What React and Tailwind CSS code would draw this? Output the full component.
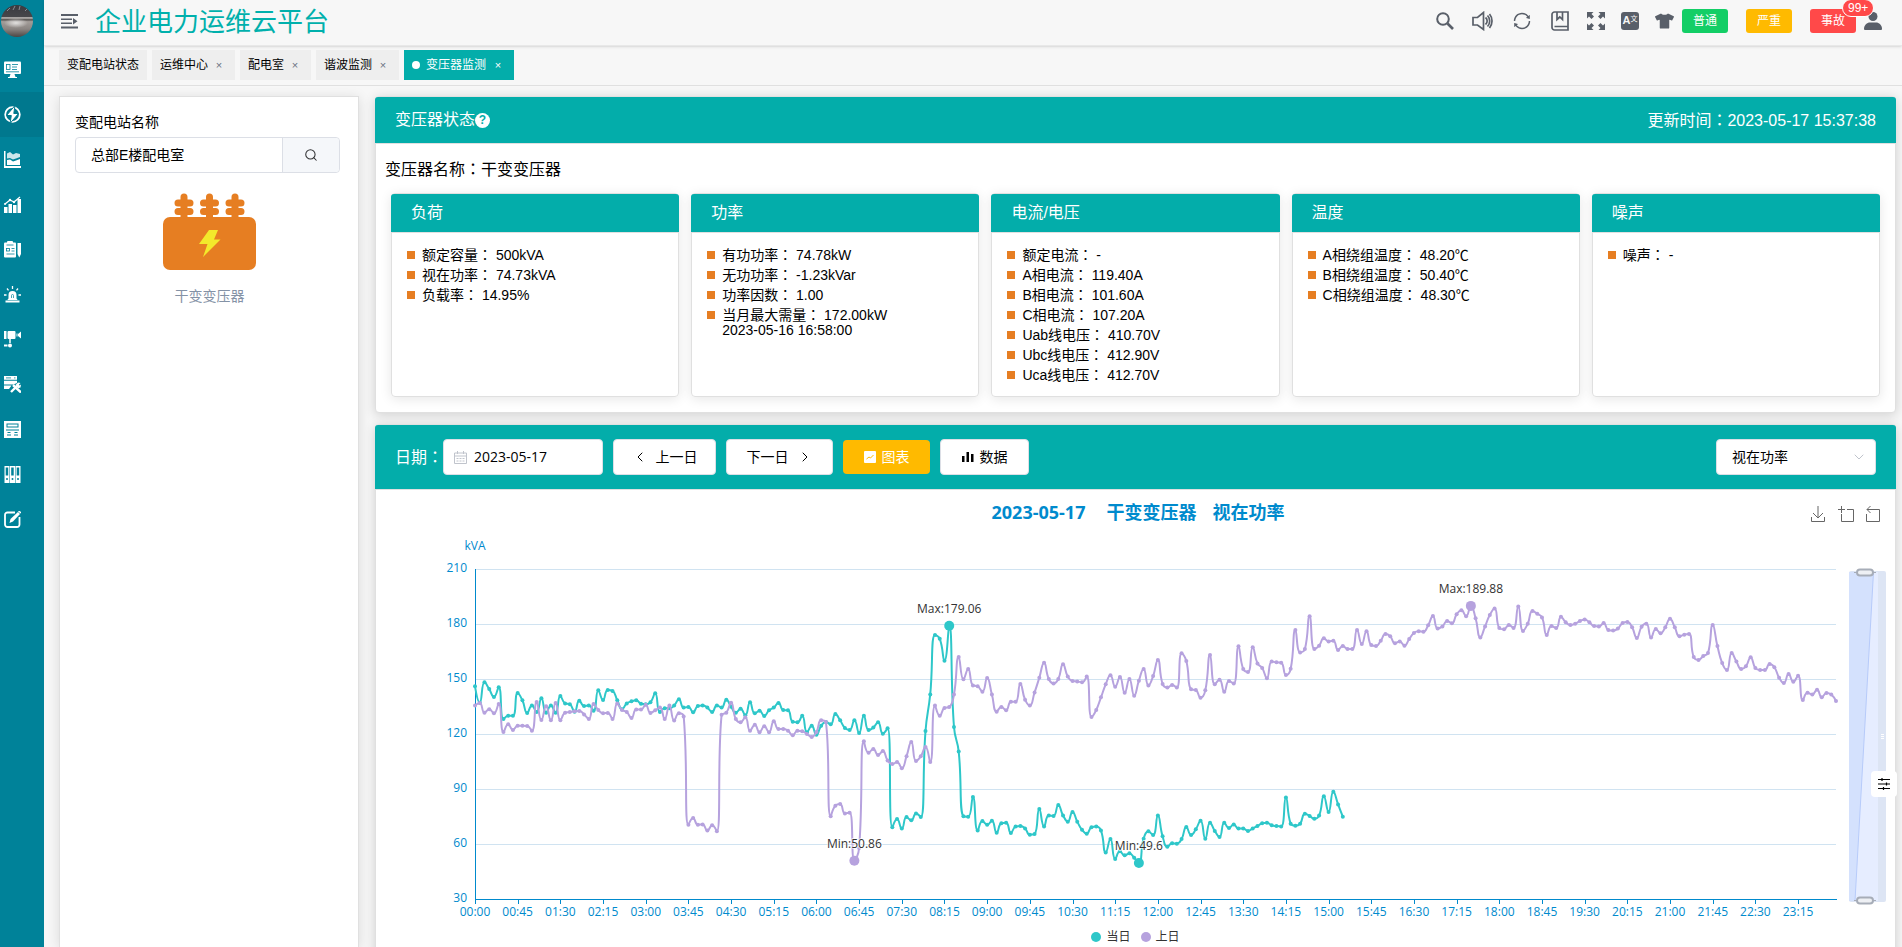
import React, { useState } from 'react';
import { FaTshirt } from 'react-icons/fa';
import { AiOutlineSync } from 'react-icons/ai';
import { Search, ChevronLeft, ChevronRight, ChevronDown } from 'lucide-react';

// one sample every 5 minutes, kVA
const TODAY = [
  146, 137, 148.2, 144.5, 140.2, 145.5, 128.2, 130, 130, 142.4, 138.4, 131.5,
  135.6, 132, 139.5, 131.6, 135.6, 131.6, 140.7, 136.7, 136.2, 132.2, 138.2, 135.3,
  135.6, 132.7, 143.8, 138.5, 144, 143.5, 138.4, 133.5, 136.7, 137.8, 138.4, 136.5,
  136.2, 137.3, 142.2, 132, 134, 134, 135.5, 138.9, 134.4, 134.7, 131.8, 135.3,
  135.6, 134.4, 132, 135.6, 134.4, 138.7, 134.9, 131.6, 133.8, 130.2, 137.3, 131.3,
  132.7, 129.8, 132.9, 134.4, 136.9, 133.1, 132.9, 126.7, 126.4, 130, 120.9, 124.5,
  119.6, 124.5, 126.5, 125.3, 130.9, 127.5, 123.3, 122.2, 127.5, 120.5, 130, 122.2,
  123.5, 126.4, 120.2, 123.1, 69.1, 73.6, 68.4, 74.7, 72.9, 76.7, 74.7, 121.6,
  141.6, 174, 172, 160, 179.06, 123.8, 110.4, 75.1, 74.9, 85.6, 67.3, 72.5,
  70.5, 72.7, 66.2, 71.3, 71.6, 66, 69.5, 69.8, 68.5, 65.1, 65.5, 79.1,
  69.6, 75.5, 75.3, 81.3, 75.6, 72.2, 77.5, 72.2, 67.8, 65.6, 69.1, 69.5,
  67.3, 55.3, 62.7, 51.8, 56, 53.8, 54.9, 52.5, 49.6, 62.9, 66.9, 64.9,
  75.6, 64.2, 58.5, 60.4, 60.2, 62.7, 69.3, 64.9, 68, 72.7, 62.9, 71.6,
  67.1, 63.8, 71.6, 68.7, 70.7, 68.4, 68.4, 67.1, 68.5, 69.8, 71.3, 71.6,
  70.2, 69.8, 69.6, 85.3, 71.1, 70, 71.1, 76.5, 75.3, 73.8, 75.5, 86,
  77.5, 88.5, 81.6, 74.9,
];

const YESTERDAY = [
  135.6, 136.9, 131.6, 133.5, 131.3, 136.4, 121.1, 125.3, 122.2, 124.5, 124.5, 124.4,
  121.8, 137.5, 127.6, 135.1, 127.5, 136.9, 127.5, 131.6, 132, 132.4, 132.5, 130.7,
  128.2, 136.4, 133.1, 131.3, 131.5, 128.2, 136.7, 133.1, 132, 128.7, 133.3, 133.3,
  136, 131.5, 132.9, 134.4, 128.2, 135.6, 127.3, 131.3, 129.6, 70.5, 74.2, 70.5,
  70.7, 67.3, 70.2, 66.9, 130.5, 131.6, 137.1, 128.2, 126.4, 129.1, 121.8, 125.1,
  120.9, 124.2, 120.9, 126.9, 122.7, 122.7, 121.8, 119.3, 121.8, 121.5, 120, 118.4,
  121.1, 127.5, 126.5, 75.1, 80.9, 81.8, 76.7, 77.1, 50.86, 57.8, 116, 109.8,
  111.8, 108.5, 110.7, 105.6, 103.6, 104.7, 101.3, 107.8, 115.6, 105.3, 107.8, 112.9,
  104.7, 135.5, 130, 134.2, 134.7, 141.6, 162, 149.8, 155.5, 146.5, 146, 143.1,
  150.5, 141.5, 132.2, 134.7, 132.9, 137.6, 137.6, 147.3, 138.7, 135.5, 142.7, 150.7,
  158.9, 150, 147.6, 150, 158, 151.3, 148.9, 148.7, 148.2, 151.3, 129.3, 133.1,
  140, 147.1, 152, 145.8, 151.1, 142.5, 150, 140.9, 149.1, 155.5, 146.5, 151.6,
  160.4, 147.3, 145.3, 146.7, 145.3, 164, 159.8, 144.4, 144, 139.8, 143.8, 163.1,
  147.1, 149.6, 143.1, 148.9, 147.5, 167.8, 155.5, 153.8, 167.3, 158.5, 156, 150.4,
  159.5, 159.1, 158.9, 152.2, 155.6, 176.7, 164.5, 166.4, 184.2, 166.4, 168.2, 172.2,
  170.5, 170.9, 165.8, 168, 166.4, 166.4, 176.7, 169.1, 176, 168.5, 168, 170.9,
  174.5, 173.3, 169.5, 170.5, 168.2, 171.8, 175.1, 176, 175.8, 179.3, 184.4, 177.5,
  178.7, 181.6, 180.4, 185.3, 187.5, 184.2, 189.88, 183.1, 172.7, 178.7, 184.9, 188.4,
  177.8, 177.1, 179.5, 177.8, 189.6, 176.2, 180.2, 187.1, 185.6, 183.6, 174, 178.9,
  177.8, 184, 180.9, 179.5, 180.2, 181.6, 182.4, 180.9, 178.9, 178.7, 180.5, 176.7,
  176.4, 177.5, 180.5, 181.1, 178.2, 172.4, 178.5, 180.2, 172.7, 177.3, 174.9, 178.2,
  182.9, 178.2, 173.3, 174.2, 174.5, 162, 160.4, 162.5, 164.2, 179.5, 168, 158.7,
  154.9, 164.2, 159.6, 155.5, 156.9, 161.8, 156, 154.9, 154.9, 158.2, 156.4, 150.7,
  147.8, 152.7, 148.5, 151.8, 138.5, 142.5, 141.6, 144.2, 140, 142.4, 141.5, 138,
];

const CARDS = [
  { title: '负荷', rows: [['额定容量', '500kVA'], ['视在功率', '74.73kVA'], ['负载率', '14.95%']] },
  { title: '功率', rows: [['有功功率', '74.78kW'], ['无功功率', '-1.23kVar'], ['功率因数', '1.00'], ['当月最大需量', '172.00kW', '2023-05-16 16:58:00']] },
  { title: '电流/电压', rows: [['额定电流', '-'], ['A相电流', '119.40A'], ['B相电流', '101.60A'], ['C相电流', '107.20A'], ['Uab线电压', '410.70V'], ['Ubc线电压', '412.90V'], ['Uca线电压', '412.70V']] },
  { title: '温度', rows: [['A相绕组温度', '48.20℃'], ['B相绕组温度', '50.40℃'], ['C相绕组温度', '48.30℃']] },
  { title: '噪声', rows: [['噪声', '-']] },
];

const TABS = ['变配电站状态', '运维中心', '配电室', '谐波监测', '变压器监测'];

// ---------- sidebar icons ----------
const BG = '#008299';
const NAV = [
  { name: '监控', icon: <><rect x="0" y="0.500" width="17" height="12.500" rx="1" /><path d="M6.500 13h4l1 3H5.500z" /><path d="M4 16.500h9" stroke="currentColor" /><g stroke={BG} fill="none" strokeWidth=".8"><rect x="2.500" y="3.500" width="3.500" height="5" /><path d="M8 3.500h6M8 6h5M8 8.500h5M2 10.800h13" /></g></> },
  { name: '电力', icon: <><circle cx="8.500" cy="8.500" r="7.300" fill="none" stroke="currentColor" strokeWidth="1.800" /><path d="M11 -.5 2.500 9.500h4.800L6 17.500l8.500-10H9.800z" stroke="#00788e" strokeWidth="1" /></> },
  { name: '趋势', icon: <><path d="M0 0h1.500v15H17v2H0z" /><path d="M3 2.500l3-1.500 3 2.500 3-1.500 4 1v3l-4 1.500-3 1-3-1.500-3 .5z" opacity=".8" /><path d="M3 9l3-.5 3 2 3-1 4-1.500v6H3z" /></> },
  { name: '统计', icon: <><rect x="0" y="11" width="3.500" height="6" /><rect x="4.500" y="8" width="3.500" height="9" /><rect x="9" y="9" width="3.500" height="8" /><rect x="13.500" y="3" width="3.500" height="14" /><path d="M1 8l5-4 4 2 6-5" fill="none" stroke="currentColor" strokeWidth="1.300" /><circle cx="1" cy="8" r="1" /><circle cx="6" cy="4" r="1.200" /><circle cx="10" cy="6" r="1.200" /></> },
  { name: '工单', icon: <><rect x="0" y="1.500" width="12" height="15" rx="1" /><rect x="3" y="0" width="6" height="3" rx="1" /><path d="M13.500 2H17v11l-1.700 3.500L13.500 13z" /><g stroke={BG} fill="none" strokeWidth=".8"><path d="M2.500 4h7M7.500 7.500h3M7.500 10h3M2.500 13h8" /><rect x="2.500" y="7.500" width="3" height="2.500" /></g></> },
  { name: '告警', icon: <><path d="M4.500 12.500V9a4 4 0 0 1 8 0v3.500l1.200 1.500H3.300z" /><rect x="1.500" y="14.500" width="14" height="2" /><path d="M8.500 0v3M3 2.500l1.500 1.800M14 2.500l-1.500 1.800M0 9h2.500M14.500 9H17" stroke="currentColor" strokeWidth="1.300" /><path d="M7.500 12V9.500a1 1 0 0 1 2 0V12" stroke={BG} strokeWidth=".7" fill="none" /></> },
  { name: '视频', icon: <><rect x="0" y="0" width="2.500" height="8" /><rect x="3.500" y="0" width="8" height="8" rx="1" /><path d="M12.500 2.500h1v3h-1zM14 3l3-2.500v7L14 5z" /><path d="M6 8v4" stroke="currentColor" strokeWidth="1.500" /><circle cx="6" cy="14.500" r="2" /><path d="M0 14.500h3.500" stroke="currentColor" strokeWidth="2" /></> },
  { name: '运维', icon: <><path d="M0 0h13v3.800H0zM0 4.800h13V7L9.500 8.500H0zM0 9.500h7.500L5 13H0z" /><path d="M7 16l6-6M9 9l8 7.500" stroke="currentColor" strokeWidth="2.400" /><path d="M11.500 9l2.500-2.500 2.500.5-1.700 1.700.8.800L17 8.500l-.5 3-2.500.8z" /><path d="M2 1.900h5M10 1.900h1.500" stroke={BG} strokeWidth=".8" /></> },
  { name: '设备', icon: <><rect x="0" y="0" width="17" height="17" /><g stroke={BG} fill="none"><rect x="3" y="3" width="11" height="3" /><path d="M2 9h13M3.500 11.500h3M10.500 11.500h3M3 14h4M10 14h4" /></g></> },
  { name: '档案', icon: <><path d="M.5 0h5v17h-5zM6 0h5v17H6zM11.500 0h5v17h-5z" /><g fill={BG}><rect x="1.700" y="1.500" width="2.500" height="8" /><rect x="7.200" y="1.500" width="2.500" height="8" /><rect x="12.700" y="1.500" width="2.500" height="8" /><circle cx="3" cy="13" r="1" /><circle cx="8.500" cy="13" r="1" /><circle cx="14" cy="13" r="1" /></g></> },
  { name: '编辑', icon: <><path d="M11 1.500H3.500A2.500 2.500 0 0 0 1 4v9.500A2.500 2.500 0 0 0 3.500 16H13a2.500 2.500 0 0 0 2.500-2.500V6" fill="none" stroke="currentColor" strokeWidth="1.800" /><path d="M5.500 12l1-4 7.500-7 2 2-7 7.500z" /><path d="M14.500 0l2.500 2" stroke="currentColor" strokeWidth="1.500" /></> },
];

// full width colon, centred in its cell
const Colon = () => <span className="font-['Noto_Sans_CJK_TC',sans-serif]">：</span>;

function Sidebar() {
  return (
    <nav className="w-11 shrink-0 bg-[#008299] text-white">
      <div className="h-[47px] pl-px pt-[5px]">
        <svg viewBox="0 0 32 32" className="w-8 h-8" aria-label="avatar">
          <defs>
            <linearGradient id="av" x1="0" y1="0" x2="0" y2="1">
              <stop offset="0" stopColor="#3a3a40" /><stop offset=".36" stopColor="#46464a" />
              <stop offset=".4" stopColor="#c4c0bd" /><stop offset=".46" stopColor="#55514f" />
              <stop offset=".52" stopColor="#a39d99" /><stop offset=".75" stopColor="#8b8582" />
              <stop offset="1" stopColor="#4b4644" />
            </linearGradient>
            <radialGradient id="shine"><stop offset="0" stopColor="#fff" stopOpacity=".7" /><stop offset="1" stopColor="#fff" stopOpacity="0" /></radialGradient>
          </defs>
          <circle cx="16" cy="16" r="16" fill="url(#av)" />
          <ellipse cx="15" cy="18" rx="12" ry="5" fill="url(#shine)" />
          <path d="M6 6l3-3M12 5l2-4M18 5l1-4M24 6l2-2" stroke="#8a8a92" />
        </svg>
      </div>
      {NAV.map((n, i) => (
        <a key={n.name} href="#" aria-label={n.name} className={i === 1 ? 'flex items-center h-[45px] pl-1 bg-[#00788e]' : 'flex items-center h-[45px] pl-1'}>
          <svg viewBox="0 0 17 17" className="w-[17px] h-[17px]" fill="currentColor">{n.icon}</svg>
        </a>
      ))}
    </nav>
  );
}

function TopBar() {
  return (
    <header className="flex items-center h-[46px] pl-[17px] pr-5 border-b border-[#e8e8e8] shadow-sm text-[#595f69]">
      <button aria-label="菜单">
        <svg viewBox="0 0 17 15" className="w-[17px] h-[15px] mt-[-2px]" fill="currentColor">
          <path d="M0 0h17v2H0zM0 4.500h11v1.500H0zM0 8.500h11V10H0zM0 12.500h17v2H0zM12 4l4.500 3.200L12 10.500z" />
        </svg>
      </button>
      <h1 className="ml-[17px] mb-[2px] text-[26px] leading-9 text-[#00b0ac]">企业电力运维云平台</h1>
      <div className="ml-auto flex items-center pb-1">
        <button aria-label="搜索" className="mr-[18px]">
          <svg viewBox="0 0 18 18" className="w-[18px] h-[18px]" fill="none" stroke="currentColor"><circle cx="7" cy="7" r="5.800" strokeWidth="2" /><path d="M11.500 11.500l5.500 5.500" strokeWidth="2.600" /></svg>
        </button>
        <button aria-label="声音" className="mr-[19px]">
          <svg viewBox="0 0 21 20" className="w-[21px] h-5" fill="none" stroke="currentColor" strokeWidth="1.700"><path d="M1 6.500h4.500L11.500 1.500v17L5.500 14H1zM13.500 6.500a4.500 4.500 0 0 1 0 7M15.500 4.500a8 8 0 0 1 0 11M17.500 3a11 11 0 0 1 0 14" /></svg>
        </button>
        <button aria-label="刷新" className="mr-[19px]"><AiOutlineSync className="w-5 h-5" /></button>
        <button aria-label="手册" className="mr-[18px]">
          <svg viewBox="0 0 18 20" className="w-[18px] h-5" fill="none" stroke="currentColor" strokeWidth="1.700"><path d="M17 15.500V1H3.500A2.500 2.500 0 0 0 1 3.500v13A2.500 2.500 0 0 0 3.500 19H17v-3.500H3.500M6 1v7.500L8.800 6l2.700 2.500V1" /></svg>
        </button>
        <button aria-label="全屏" className="mr-4">
          <svg viewBox="0 0 18 18" className="w-[18px] h-[18px]" fill="currentColor"><path d="M0 0h6.500L4.500 2 7 4.500 4.500 7 2 4.500 0 6.500zM18 0v6.500L16 4.500 13.500 7 11 4.500 13.500 2l-2-2zM0 18v-6.500l2 2L4.500 11 7 13.500 4.500 16l2 2zM18 18h-6.500l2-2L11 13.500l2.500-2.500 2.500 2.500 2-2z" /></svg>
        </button>
        <button aria-label="语言" className="mr-4 w-[18px] h-[18px] rounded-[3px] bg-[#595f69] text-[#f7f7f7] flex items-center justify-center text-[11px] leading-none font-bold">
          A<span className="text-[7px] font-normal mb-1">文</span>
        </button>
        <button aria-label="主题" className="mr-2"><FaTshirt className="w-[19px] h-[18px]" /></button>
        <button className="w-[46px] h-6 rounded-[3px] bg-[#13ce66] text-white text-xs">普通</button>
        <button className="w-[46px] h-6 ml-[18px] rounded-[3px] bg-[#ffba00] text-white text-xs">严重</button>
        <div className="relative ml-[18px] flex">
          <button className="w-[46px] h-6 rounded-[3px] bg-[#ff4949] text-white text-xs">事故</button>
          <sup className="absolute -top-[10px] left-8 z-10 h-[18px] px-[5px] rounded-full border border-white bg-[#ff4949] text-white text-xs leading-4">99+</sup>
        </div>
        <button aria-label="用户" className="ml-2">
          <svg viewBox="0 0 18 18" className="w-[18px] h-[18px]" fill="currentColor"><circle cx="9" cy="4.500" r="4.500" /><path d="M0 17c0-4 3-6.500 6-6.500h6c3 0 6 2.500 6 6.500q0 1-1 1H1q-1 0-1-1z" /></svg>
        </button>
      </div>
    </header>
  );
}

function TabBar() {
  return (
    <div className="flex items-start gap-[5px] h-10 pt-1 pl-[15px] border-b border-[#e0e0e0] text-xs">
      {TABS.map((t, i) => (
        <div key={t} className={i === 4 ? 'flex items-center h-[30px] px-2 bg-[#03adaa] text-white' : 'flex items-center h-[30px] px-2 bg-[#eeeeee] text-black'}>
          {i === 4 && <span className="w-2 h-2 mr-[6px] rounded-full bg-white" />}
          <a href="#">{t}</a>
          {i > 0 && <button aria-label="关闭" className={i === 4 ? 'ml-1 w-4 text-[11px] text-white' : 'ml-[3px] w-4 text-[11px] text-gray-500'}>×</button>}
        </div>
      ))}
    </div>
  );
}

function StationPanel() {
  return (
    <aside className="w-[300px] shrink-0 px-[15px] pt-[14px] bg-white border border-b-0 border-[#e0e0e0] shadow-[0_2px_12px_rgba(0,0,0,0.12)] text-sm">
      <label htmlFor="station" className="block leading-5 pt-px">变配电站名称</label>
      <div className="flex h-9 mt-[5px] mr-[3px] border border-[#dcdfe6] rounded">
        <input id="station" defaultValue="总部E楼配电室" className="flex-1 min-w-0 px-[15px] outline-none" />
        <button aria-label="搜索" className="w-[57px] flex items-center justify-center bg-[#f5f7fa] border-l border-[#dcdfe6] rounded-r"><Search size={14} strokeWidth={1.8} className="text-[#303133]" /></button>
      </div>
      <button className="block w-full mt-5 pl-px text-[#8492a6]">
        <svg viewBox="0 0 93 77" className="w-[93px] h-[77px] mx-auto">
          <g stroke="#e67e22" strokeWidth="7" strokeLinecap="round">
            <path d="M21 4v24M15 10h12M15 18.500h12M46.500 4v24M40.500 10h12M40.500 18.500h12M72 4v24M66 10h12M66 18.500h12" />
          </g>
          <rect y="24" width="93" height="53" rx="7" fill="#e67e22" />
          <path d="M46 37h9l-4 9.500h6.500L40 64l4.500-13H36z" fill="#f3e92b" />
        </svg>
        <span className="block mt-4 leading-5">干变变压器</span>
      </button>
    </aside>
  );
}

function StatusPanel() {
  return (
    <section className="bg-white border border-[#e0e0e0] rounded shadow-[0_2px_12px_rgba(0,0,0,0.16)]">
      <div className="flex items-center justify-between h-[47px] -mx-px px-5 rounded-t-[3px] bg-[#03adaa] text-white border-b border-[#e0e0e0]">
        <h2 className="flex items-center">变压器状态
          <button aria-label="帮助" className="w-[15px] h-[15px] rounded-full bg-white text-[#03adaa] text-xs leading-[15px] font-bold">?</button>
        </h2>
        <span>更新时间<Colon />2023-05-17 15:37:38</span>
      </div>
      <p className="h-[37px] pl-[9px] pt-3 leading-6">变压器名称<Colon />干变变压器</p>
      <div className="grid grid-cols-5 gap-3 px-[15px] pt-3 pb-[15px]">
        {CARDS.map((c) => (
          <div key={c.title} className="h-[204px] border border-[#e0e0e0] rounded shadow-[0_2px_12px_rgba(0,0,0,0.1)]">
            <h3 className="h-[39px] -mx-px leading-[38px] px-5 rounded-t-[3px] bg-[#03adaa] text-white border-b border-[#e0e0e0]">{c.title}</h3>
            <ul className="pt-[13px] pl-[15px] text-sm leading-4">
              {c.rows.map((r) => (
                <li key={r[0]} className="flex h-4 mb-1">
                  <span className="w-2 h-2 mt-[5px] mr-[7px] shrink-0 bg-[#e67e22]" />
                  <span>{r[0]}<Colon /> {r[1]}{r[2] && <span className="block leading-[14px]">{r[2]}</span>}</span>
                </li>
              ))}
            </ul>
          </div>
        ))}
      </div>
    </section>
  );
}

// ---------- chart ----------
const X0 = 99;
const STEP = 1361 / 287;
const px = (i) => X0 + i * STEP;
const py = (v) => 35 + ((210 - v) * 330) / 180;
const clamp = (v, a, b) => Math.max(Math.min(a, b), Math.min(Math.max(a, b), v));

// bezier smoothing that never leaves the box between two samples
function smoothPath(data) {
  const p = data.map((v, i) => [px(i), py(v)]);
  let d = `M${p[0][0]} ${p[0][1]}`;
  let out = p[0];
  for (let i = 1; i < p.length; i++) {
    const [x, y] = p[i];
    const prev = p[i - 1];
    const next = p[i + 1];
    let c1 = [x, y];
    let nextOut = [x, y];
    if (next) {
      const lp = Math.hypot(x - prev[0], y - prev[1]);
      const ln = Math.hypot(next[0] - x, next[1] - y);
      const r = ln / (ln + lp);
      nextOut = [0, 1].map((k) => clamp(p[i][k] + (next[k] - prev[k]) * 0.5 * r, p[i][k], next[k]));
      c1 = [0, 1].map((k) => clamp(p[i][k] - ((nextOut[k] - p[i][k]) * lp) / ln, prev[k], p[i][k]));
      nextOut = [0, 1].map((k) => p[i][k] + ((p[i][k] - c1[k]) * ln) / lp);
    }
    d += `C${out[0].toFixed(1)} ${out[1].toFixed(1)} ${c1[0].toFixed(1)} ${c1[1].toFixed(1)} ${x.toFixed(1)} ${y.toFixed(1)}`;
    out = nextOut;
  }
  return d;
}

function Series({ data, color }) {
  return (
    <g>
      <path d={smoothPath(data)} fill="none" stroke={color} strokeWidth="2" strokeLinejoin="bevel" />
      {data.map((v, i) => <circle key={i} cx={px(i)} cy={py(v)} r="2" fill={color} />)}
    </g>
  );
}

function Mark({ i, v, label, color }) {
  return (
    <g>
      <circle cx={px(i)} cy={py(v)} r="5" fill={color} />
      <text x={px(i)} y={py(v) - 13} textAnchor="middle" fill="#333" stroke="#fff" strokeWidth="2" strokeOpacity=".7" paintOrder="stroke">{label}</text>
    </g>
  );
}

function Handle({ y }) {
  return (
    <g stroke="#a7adb8" fill="#eef0f4">
      <path d={`M1478 ${y}h22`} strokeWidth="1" />
      <rect x="1481" y={y - 3} width="16" height="6" rx="3" strokeWidth="2" />
    </g>
  );
}

function LoadChart({ hidden }) {
  const hours = Array.from({ length: 32 }, (_, k) => k * 9);
  const label = (i) => `${String(Math.floor((i * 5) / 60)).padStart(2, '0')}:${String((i * 5) % 60).padStart(2, '0')}`;
  return (
    <svg viewBox="0 0 1519 390" className="block w-full font-['Open_Sans','Noto_Sans',sans-serif]" fontSize="12">
      <text x={X0} y="16" textAnchor="middle" fill="#008acd">kVA</text>
      {[210, 180, 150, 120, 90, 60, 30].map((v) => (
        <g key={v}>
          {v > 30 && <path d={`M${X0} ${Math.round(py(v))}.5H1460`} stroke="#d0e3f1" />}
          <text x="91" y={py(v) + 3} textAnchor="end" fill="#008acd">{v}</text>
        </g>
      ))}
      <path d="M99.5 35v331M99 365.500h1362" stroke="#008acd" fill="none" />
      {hours.map((i) => (
        <g key={i}>
          <path d={`M${Math.round(px(i))}.5 365v5`} stroke="#008acd" />
          <text x={px(i)} y="382" textAnchor="middle" fill="#008acd">{label(i)}</text>
        </g>
      ))}
      {!hidden.today && <Series data={TODAY} color="#2ec7c9" />}
      {!hidden.yesterday && <Series data={YESTERDAY} color="#b6a2de" />}
      {!hidden.today && <><Mark i={100} v={179.06} label="Max:179.06" color="#2ec7c9" /><Mark i={140} v={49.6} label="Min:49.6" color="#2ec7c9" /></>}
      {!hidden.yesterday && <><Mark i={210} v={189.88} label="Max:189.88" color="#b6a2de" /><Mark i={80} v={50.86} label="Min:50.86" color="#b6a2de" /></>}

      {/* zoom slider */}
      <rect x="1473" y="37" width="37" height="331" rx="2" fill="#dde5f4" />
      <rect x="1473" y="38" width="29" height="329" fill="#e6edff" />
      <path d="M1473 38h24.500L1479 367h-6z" fill="#d4e1fd" />
      <path d="M1497.500 38L1479 367" stroke="#b7cbfa" />
      <path d="M1505 200.500h3M1505 202.500h3M1505 204.500h3" stroke="#fff" />
      <Handle y={38.5} />
      <Handle y={366.5} />
    </svg>
  );
}

const whiteBtn = 'flex items-center justify-center gap-2 h-9 rounded bg-white border border-[#dcdfe6] text-black whitespace-nowrap';

function ChartPanel() {
  const [hidden, setHidden] = useState({});
  const toggle = (k) => setHidden({ ...hidden, [k]: !hidden[k] });
  return (
    <section className="mt-[11px] bg-white border border-[#e0e0e0] rounded shadow-[0_2px_12px_rgba(0,0,0,0.16)]">
      <div className="flex items-center h-[65px] -mx-px px-5 rounded-t-[3px] bg-[#03adaa] border-b border-[#e0e0e0] text-sm">
        <label htmlFor="date" className="text-base text-white">日期<Colon /></label>
        <div className="flex items-center w-40 h-9 pl-[10px] rounded bg-white border border-[#dcdfe6]">
          <svg viewBox="0 0 13 13" className="w-[13px] h-[13px] shrink-0" fill="none" stroke="#c0c4cc"><path d="M.5 2h12v10.500H.500zM.5 5h12M3.500 0v3M9.500 0v3M2.500 7.500h2M5.500 7.500h2M8.500 7.500h2M2.500 10h2M5.500 10h2M8.500 10h2" /></svg>
          <input id="date" defaultValue="2023-05-17" className="w-full min-w-0 ml-[7px] outline-none font-['Open_Sans',sans-serif]" />
        </div>
        <button className={whiteBtn + ' w-[103px] ml-[10px]'}><ChevronLeft size={16} strokeWidth={1.5} />上一日</button>
        <button className={whiteBtn + ' w-[107px] ml-[10px]'}>下一日<ChevronRight size={16} strokeWidth={1.5} /></button>
        <button className="flex items-center justify-center gap-[6px] w-[87px] h-[34px] ml-[10px] rounded bg-[#ffba00] text-white">
          <svg viewBox="0 0 12 12" className="w-3 h-3"><rect width="12" height="12" rx="1" fill="#fff" /><path d="M2.500 8l2.500-2 1.500 1L9.500 4" fill="none" stroke="#ffba00" /></svg>图表
        </button>
        <button className="flex items-center justify-center gap-[6px] w-[89px] h-9 ml-[10px] rounded bg-white border border-[#dcdfe6]">
          <svg viewBox="0 0 12 12" className="w-3 h-3"><path d="M0 5h2.500v6H0zM4.500 1H7v10H4.500zM9 3h2.500v8H9z" /></svg>数据
        </button>
        <div className="relative ml-auto">
          <select aria-label="参数" className="appearance-none w-40 h-9 pl-[15px] rounded bg-white border border-[#dcdfe6] outline-none">
            <option>视在功率</option>
            <option>有功功率</option>
          </select>
          <ChevronDown size={16} strokeWidth={1.5} className="absolute right-[9px] top-[10px] text-[#c0c4cc] pointer-events-none" />
        </div>
      </div>
      <div className="grid grid-cols-3 items-center h-11">
        <h2 className="col-start-2 flex justify-center gap-4 text-lg leading-6 font-bold text-[#008acd] font-['Open_Sans','Noto_Sans_CJK_SC',sans-serif]">
          <span className="w-[104px] text-center">2023-05-17</span><span>干变变压器</span><span>视在功率</span>
        </h2>
        <div className="flex justify-end gap-3 pr-[15px] pt-1 text-[#666]">
          <button aria-label="保存为图片"><svg viewBox="0 0 16 17" className="w-4 h-[17px]" fill="none" stroke="currentColor"><path d="M1.500 11v4.500h13V11M8 0v12M3 7l5 5 5-5" /></svg></button>
          <button aria-label="区域缩放"><svg viewBox="0 0 16 17" className="w-4 h-[17px]" fill="none" stroke="currentColor"><path d="M3.500 0v7M0 3.500h7M9 3.500h6.500v12h-12V8" /></svg></button>
          <button aria-label="还原"><svg viewBox="0 0 14 17" className="w-[14px] h-[17px]" fill="none" stroke="currentColor"><path d="M4.500 0L1 3.500 4.500 7M1 3.500h12.500v12H.500V8" /></svg></button>
        </div>
      </div>
      <div className="relative">
        <LoadChart hidden={hidden} />
        <button aria-label="设置" className="absolute -right-[2px] top-[237px] w-[26px] h-[26px] flex items-center justify-center rounded bg-white">
          <svg viewBox="0 0 12 12" className="w-3 h-3" stroke="#000" strokeWidth="1.200"><path d="M0 1.500h12M0 6h12M0 10.500h12M4 0v3M8.500 4.500v3M5.500 9v3" /></svg>
        </button>
      </div>
      <div className="flex justify-center gap-[10px] h-[26px] text-xs text-[#333]">
        <button onClick={() => toggle('today')} className="flex items-center gap-[5px] h-[26px]"><span className="w-[10px] h-[10px] rounded-full bg-[#2ec7c9]" />当日</button>
        <button onClick={() => toggle('yesterday')} className="flex items-center gap-[5px] h-[26px]"><span className="w-[10px] h-[10px] rounded-full bg-[#b6a2de]" />上日</button>
      </div>
      <div className="h-5" />
    </section>
  );
}

export default function App() {
  return (
    <div className="flex h-screen overflow-hidden bg-[#f7f7f7] text-base text-black font-['Liberation_Sans','Noto_Sans_CJK_SC',sans-serif]">
      <Sidebar />
      <div className="flex flex-col flex-1 min-w-0">
        <TopBar />
        <TabBar />
        <div className="flex flex-1 min-h-0 gap-4 pl-[15px] pr-[6px] pt-[10px]">
          <StationPanel />
          <main className="flex-1 min-w-0 -mx-4 px-4 -mt-[10px] pt-[10px] overflow-y-auto [scrollbar-width:none]">
            <StatusPanel />
            <ChartPanel />
          </main>
        </div>
      </div>
    </div>
  );
}
